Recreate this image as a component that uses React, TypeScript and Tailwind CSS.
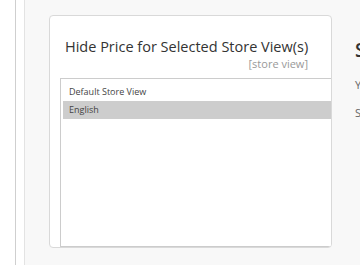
import React from 'react';

const storeViews = [
  { id: 0, label: 'Default Store View', selected: false },
  { id: 1, label: 'English', selected: true },
];

export default function App() {
  return (
    <div
      className="flex h-[265px] w-[360px] overflow-hidden bg-white"
      style={{ fontFamily: '"Open Sans", "Liberation Sans", sans-serif' }}
    >
      {/* page rails */}
      <div className="w-[15px] shrink-0 bg-white" />
      <div className="w-[9px] shrink-0 border-l border-[#cfcfcf] bg-white" />

      <div className="flex flex-1 border-l border-[#e3e3e3] bg-[#f8f8f8] pl-[24px] pt-[15px]">
        {/* Hide price card */}
        <div className="flex h-[233px] w-[283px] shrink-0 flex-col overflow-hidden rounded-[4px] border border-[#d9d9d9] bg-white">
          <div className="pl-[15px] pr-[23px] pt-[21px]">
            <h2 className="whitespace-nowrap text-[14.5px] leading-[20px] text-[#333]">
              Hide Price for Selected Store View(s)
            </h2>
            <div className="text-right text-[11px] leading-[14px] text-[#999]">[store view]</div>
          </div>

          <div className="ml-[10px] mt-[7px] w-[300px] flex-1 border border-[#cccccc] bg-white p-[2px] pt-[4px]">
            {storeViews.map((v) => (
              <div
                key={v.id}
                className={`h-[18px] whitespace-nowrap pl-[6px] text-[9px] leading-[18px] text-[#444] ${
                  v.selected ? 'bg-[#cdcdcd]' : ''
                }`}
              >
                {v.label}
              </div>
            ))}
          </div>
        </div>

        {/* next column, clipped by the window edge */}
        <div className="ml-[23px] shrink-0 pt-[23px]">
          <div className="text-[19px] font-semibold leading-[24px] text-[#333]">Settings</div>
          <div className="mt-[16px] text-[11px] leading-[14px] text-[#666]">Yes</div>
          <div className="mt-[14px] text-[11px] leading-[14px] text-[#666]">Store</div>
        </div>
      </div>
    </div>
  );
}
